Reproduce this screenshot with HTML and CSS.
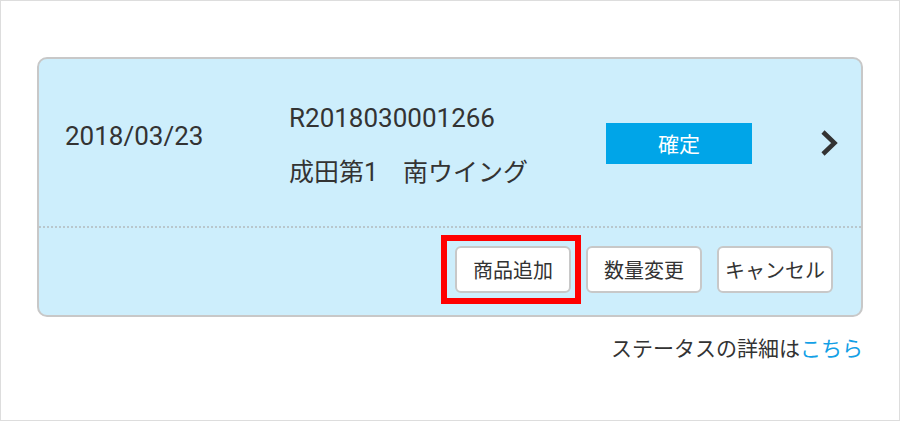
FILE: index.html
```html
<!DOCTYPE html>
<html lang="ja">
<head>
    <meta charset="UTF-8">
    <meta name="viewport" content="width=device-width, initial-scale=1.0">
    <title>予約一覧</title>
    <link rel="stylesheet" href="styles.css">
</head>
<body>
    <div class="frame">
        <div class="card">
            <div class="card-top">
                <div class="date">2018/03/23</div>
                <div class="info">
                    <div class="number">R2018030001266</div>
                    <div class="place">成田第1　南ウイング</div>
                </div>
                <div class="status">確定</div>
                <div class="arrow">
                    <svg width="18" height="26" viewBox="0 0 18 26">
                        <polyline points="2,2 13.5,13 2,24" fill="none" stroke="#333" stroke-width="4.5"/>
                    </svg>
                </div>
            </div>
            <div class="card-bottom">
                <button class="btn btn-marked">商品追加<span class="mark"></span></button>
                <button class="btn">数量変更</button>
                <button class="btn">キャンセル</button>
            </div>
        </div>
        <div class="note">ステータスの詳細は<a href="#" class="link">こちら</a></div>
    </div>
</body>
</html>
```

FILE: styles.css
```css
body {
    margin: 0;
    background: #ffffff;
    font-family: Roboto, "Noto Sans CJK JP", sans-serif;
    color: #333333;
}

.frame {
    box-sizing: border-box;
    width: 900px;
    height: 421px;
    border: 1px solid #dddddd;
    padding: 56px 36px 0 36px;
}

.card {
    background-color: #cdeefc;
    border: 2px solid #c8c8c8;
    border-radius: 10px;
}

.card-top {
    display: flex;
    align-items: flex-start;
    height: 167px;
    padding-left: 26px;
}

.date {
    width: 224px;
    margin-top: 62px;
    font-size: 26px;
    line-height: 30px;
}

.info {
    width: 317px;
    margin-top: 44px;
}

.number {
    font-size: 26px;
    line-height: 30px;
}

.place {
    margin-top: 25px;
    font-size: 25px;
    line-height: 30px;
}

.status {
    width: 146px;
    height: 41px;
    margin-top: 64px;
    background-color: #00a5e8;
    color: #ffffff;
    font-family: "Noto Sans CJK JP", sans-serif;
    font-size: 21px;
    line-height: 41px;
    text-align: center;
}

.arrow {
    margin-left: 69px;
    margin-top: 71px;
    line-height: 0;
}

.arrow svg {
    overflow: visible;
}

.card-bottom {
    display: flex;
    justify-content: flex-end;
    gap: 15px;
    border-top: 2px dotted #b9c7cd;
    padding: 18px 28px 22px 0;
}

.btn {
    box-sizing: border-box;
    width: 116px;
    height: 47px;
    padding: 0;
    background-color: #ffffff;
    border: 2px solid #c8c8c8;
    border-radius: 6px;
    color: #333333;
    font-family: "Noto Sans CJK JP", sans-serif;
    font-size: 20px;
}

.btn-marked {
    position: relative;
}

/* red highlight frame drawn over the first button */
.mark {
    position: absolute;
    left: -16px;
    right: -12px;
    top: -13px;
    bottom: -13px;
    border: 6px solid #ff0000;
}

.note {
    margin-top: 15px;
    text-align: right;
    font-family: "Noto Sans CJK JP", sans-serif;
    font-size: 21px;
    line-height: 30px;
}

.link {
    color: #12a0e6;
    text-decoration: none;
}
```
